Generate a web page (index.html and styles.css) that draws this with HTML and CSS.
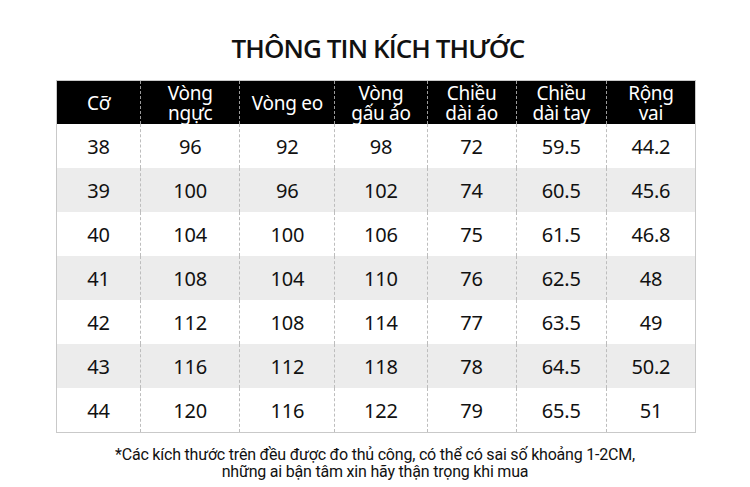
FILE: index.html
```html
<!DOCTYPE html>
<html lang="vi">
<head>
<meta charset="utf-8">
<title>Thông tin kích thước</title>
<link rel="stylesheet" href="styles.css">
</head>
<body>
<div class="page">
  <h1 class="title">THÔNG TIN KÍCH THƯỚC</h1>
  <table class="size-table">
    <colgroup>
      <col class="c1"><col class="c2"><col class="c3"><col class="c4"><col class="c5"><col class="c6"><col class="c7">
    </colgroup>
    <thead>
      <tr>
        <th>Cỡ</th>
        <th>Vòng<br>ngực</th>
        <th>Vòng eo</th>
        <th>Vòng<br>gấu áo</th>
        <th>Chiều<br>dài áo</th>
        <th>Chiều<br>dài tay</th>
        <th>Rộng<br>vai</th>
      </tr>
    </thead>
    <tbody>
      <tr><td>38</td><td>96</td><td>92</td><td>98</td><td>72</td><td>59.5</td><td>44.2</td></tr>
      <tr><td>39</td><td>100</td><td>96</td><td>102</td><td>74</td><td>60.5</td><td>45.6</td></tr>
      <tr><td>40</td><td>104</td><td>100</td><td>106</td><td>75</td><td>61.5</td><td>46.8</td></tr>
      <tr><td>41</td><td>108</td><td>104</td><td>110</td><td>76</td><td>62.5</td><td>48</td></tr>
      <tr><td>42</td><td>112</td><td>108</td><td>114</td><td>77</td><td>63.5</td><td>49</td></tr>
      <tr><td>43</td><td>116</td><td>112</td><td>118</td><td>78</td><td>64.5</td><td>50.2</td></tr>
      <tr><td>44</td><td>120</td><td>116</td><td>122</td><td>79</td><td>65.5</td><td>51</td></tr>
    </tbody>
  </table>
  <p class="note">*Các kích thước trên đều được đo thủ công, có thể có sai số khoảng 1-2CM,<br>những ai bận tâm xin hãy thận trọng khi mua</p>
</div>
</body>
</html>
```

FILE: styles.css
```css
html, body {
  margin: 0;
  padding: 0;
  background: #ffffff;
}
.page {
  width: 750px;
  height: 487px;
  display: flex;
  flex-direction: column;
  align-items: center;
  font-family: "Noto Sans", "Open Sans", sans-serif;
  color: #111;
}
.title {
  margin: 28px 0 0 6px;
  font-family: "Open Sans", "Noto Sans", sans-serif;
  font-weight: 600;
  font-size: 26px;
  line-height: 40px;
  letter-spacing: -0.9px;
  color: #111;
}
.size-table {
  margin: 12px 0 0 2px;
  border-collapse: collapse;
  table-layout: fixed;
  width: 640px;
  border: 1px solid #c9c9c9;
}
.c1 { width: 84px; }
.c2 { width: 99px; }
.c3 { width: 95px; }
.c4 { width: 92px; }
.c5 { width: 89px; }
.c6 { width: 90px; }
.c7 { width: 89px; }
.size-table th {
  background: #000;
  color: #fff;
  font-weight: 400;
  font-size: 19px;
  line-height: 20px;
  letter-spacing: -0.3px;
  height: 43px;
  padding: 0;
  border-left: 1px dashed #9a9a9a;
  vertical-align: middle;
}
.size-table td {
  height: 44px;
  padding: 0;
  text-align: center;
  font-size: 20px;
  letter-spacing: -0.2px;
  color: #111;
  border-left: 1px dashed #bdbdbd;
  vertical-align: middle;
}
.size-table th:first-child,
.size-table td:first-child {
  border-left: none;
}
.size-table tbody tr:nth-child(even) td {
  background: #ececec;
}
.note {
  margin: 13px 0 0 0;
  text-align: center;
  font-family: "Roboto", "Noto Sans", sans-serif;
  font-size: 16px;
  line-height: 17px;
  letter-spacing: -0.2px;
  color: #111;
}
```
